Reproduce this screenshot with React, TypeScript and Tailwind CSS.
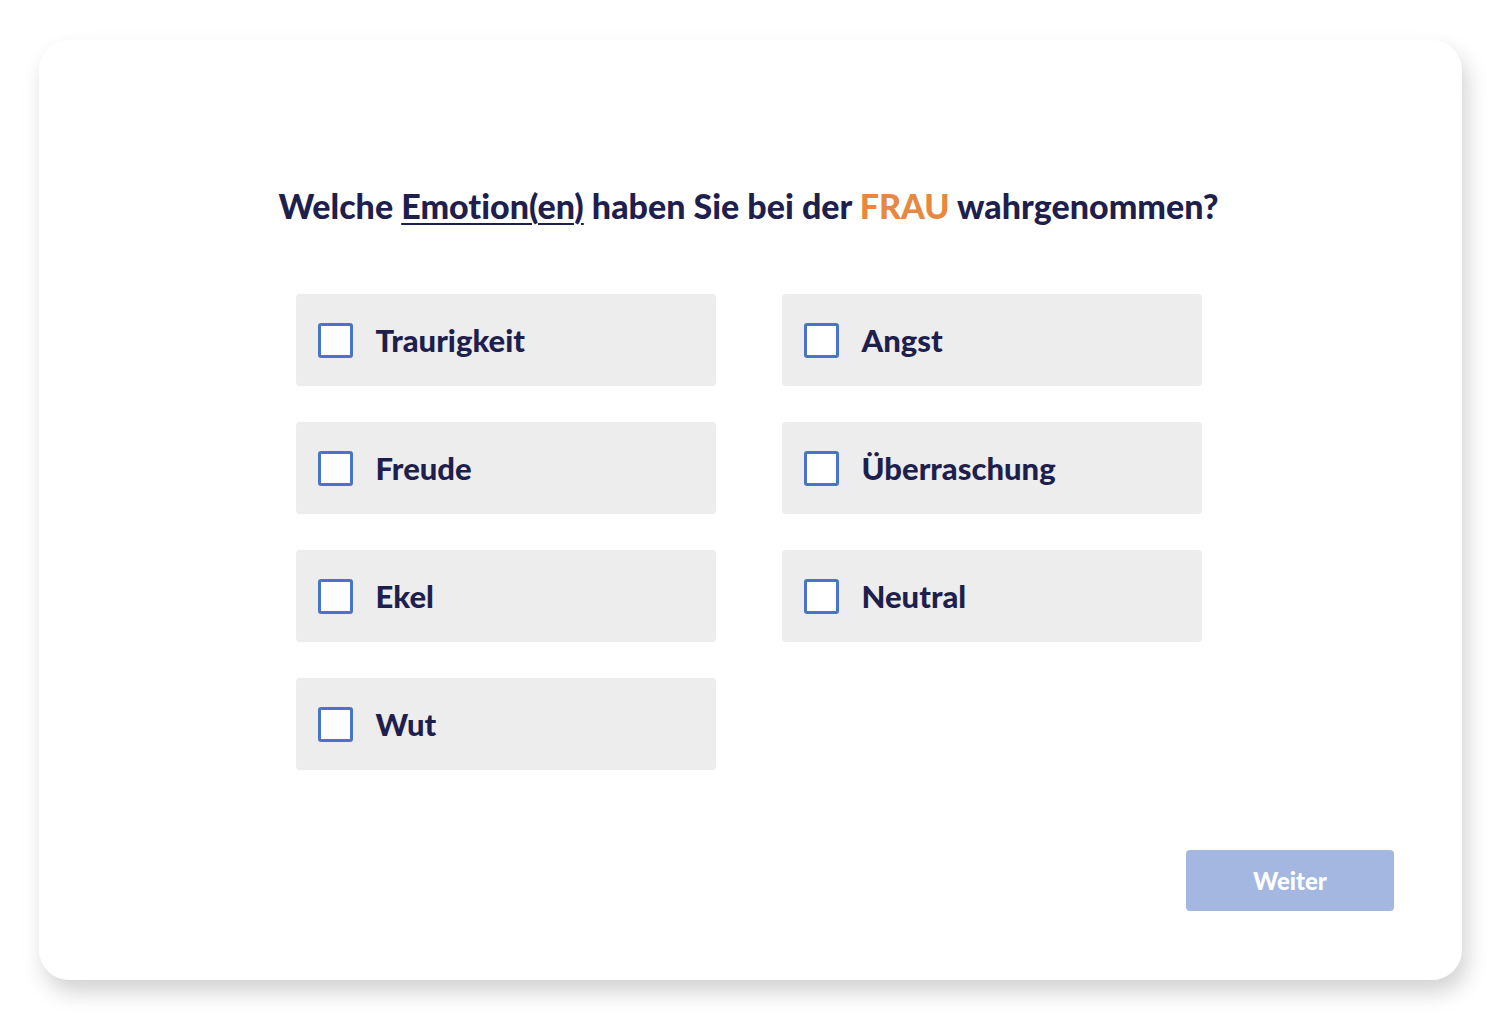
import React from "react";

const options: [string, string][] = [
  ["Traurigkeit", "Angst"],
  ["Freude", "Überraschung"],
  ["Ekel", "Neutral"],
  ["Wut", ""],
];

function Option({ label }: { label: string }) {
  return (
    <div className="h-[92px] rounded-[4px] bg-[#ededed] flex items-center pl-[22px]">
      <div className="w-[35px] h-[35px] border-[3px] border-[#4a74c9] rounded-[3px] bg-white" />
      <span className="ml-[23px] text-[31px] font-black text-[#1f1f4e] leading-none">{label}</span>
    </div>
  );
}

export default function App() {
  const flat = options.flat();
  return (
    <div
      className="w-[1501px] h-[1021px] bg-white pt-[40px] pl-[39px]"
      style={{
        fontFamily: "Lato, 'Noto Sans', sans-serif",
        fontVariantLigatures: "none",
        fontFeatureSettings: '"liga" 0, "clig" 0',
      }}
    >
      <div className="w-[1423px] h-[940px] rounded-[30px] bg-white shadow-[5px_12px_22px_rgba(0,0,0,0.18)] flex flex-col">
        <h1 className="mt-[143px] text-center text-[34px] font-black text-[#1f1f4e] leading-[46px] pr-[4px]">
          Welche <span className="underline underline-offset-[4px] decoration-[2px]">Emotion(en)</span> haben Sie bei der{" "}
          <span className="text-[#e8873f]">FRAU</span> wahrgenommen?
        </h1>
        <div className="mt-[65px] grid grid-cols-[420px_420px] gap-x-[66px] gap-y-[36px] justify-center pr-[4px]">
          {flat.map((l, i) => (l ? <Option key={i} label={l} /> : <div key={i} />))}
        </div>
        <div className="flex-1" />
        <div className="flex justify-end pr-[68px] pb-[69px]">
          <button className="w-[208px] h-[61px] rounded-[4px] bg-[#a3b7e0] text-white text-[24px] font-black">
            Weiter
          </button>
        </div>
      </div>
    </div>
  );
}
